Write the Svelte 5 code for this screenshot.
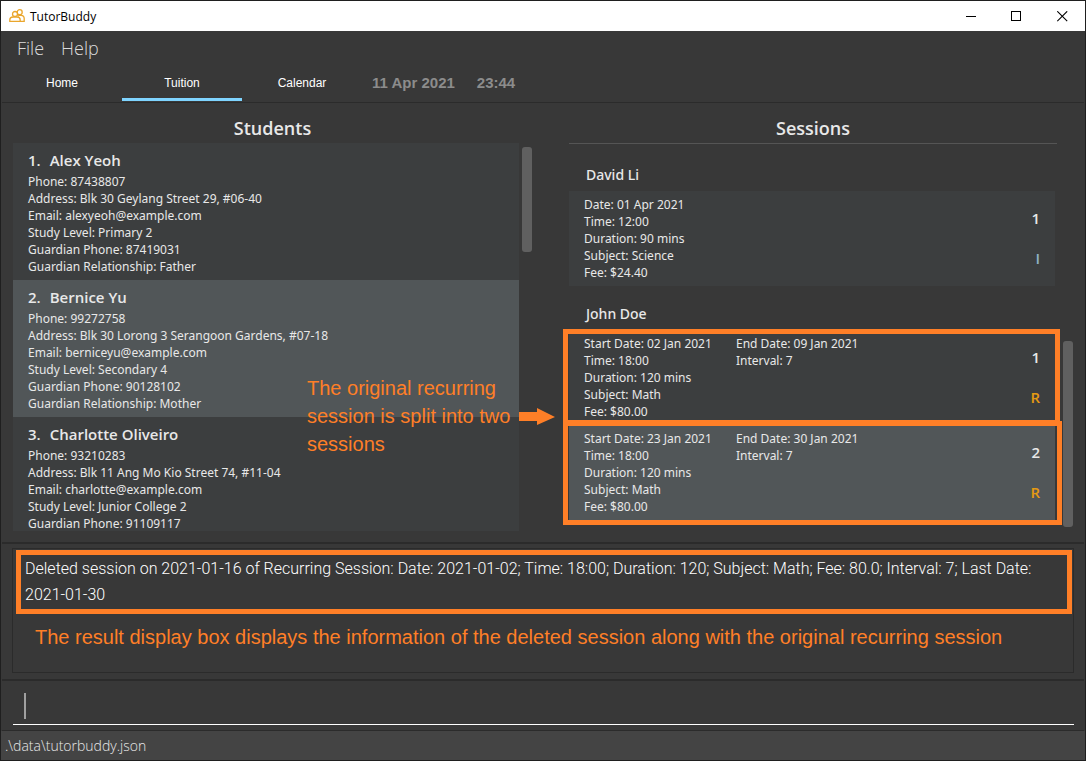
<script>
  const tabs = ['Home', 'Tuition', 'Calendar'];
  let active = $state('Tuition');

  const students = [
    {
      name: 'Alex Yeoh', phone: '87438807', address: 'Blk 30 Geylang Street 29, #06-40',
      email: 'alexyeoh@example.com', level: 'Primary 2', guardian: '87419031', relation: 'Father'
    },
    {
      name: 'Bernice Yu', phone: '99272758', address: 'Blk 30 Lorong 3 Serangoon Gardens, #07-18',
      email: 'berniceyu@example.com', level: 'Secondary 4', guardian: '90128102', relation: 'Mother'
    },
    {
      name: 'Charlotte Oliveiro', phone: '93210283', address: 'Blk 11 Ang Mo Kio Street 74, #11-04',
      email: 'charlotte@example.com', level: 'Junior College 2', guardian: '91109117'
    }
  ];

  const groups = [
    {
      name: 'David Li',
      sessions: [
        { left: ['Date: 01 Apr 2021', 'Time: 12:00', 'Duration: 90 mins', 'Subject: Science', 'Fee: $24.40'], right: [], kind: 'I' }
      ]
    },
    {
      name: 'John Doe',
      sessions: [
        { left: ['Start Date: 02 Jan 2021', 'Time: 18:00', 'Duration: 120 mins', 'Subject: Math', 'Fee: $80.00'], right: ['End Date: 09 Jan 2021', 'Interval: 7'], kind: 'R' },
        { left: ['Start Date: 23 Jan 2021', 'Time: 18:00', 'Duration: 120 mins', 'Subject: Math', 'Fee: $80.00'], right: ['End Date: 30 Jan 2021', 'Interval: 7'], kind: 'R' }
      ]
    }
  ];

  const result =
    'Deleted session on 2021-01-16 of Recurring Session: Date: 2021-01-02; Time: 18:00; Duration: 120; Subject: Math; Fee: 80.0; Interval: 7; Last Date: 2021-01-30';
</script>

<div class="window">
  <header class="titlebar">
    <svg class="logo" width="16" height="14" viewBox="0 0 16 14" fill="none" stroke="#eaa62c" stroke-width="1.3" aria-hidden="true">
      <circle cx="10.7" cy="3.2" r="2.5" />
      <path d="M9 7.2L10.2 6.4H12C13.9 6.4 15.2 7.8 15.2 9.6V12.3H11" />
      <circle cx="6" cy="5" r="2.5" fill="#fff" />
      <path fill="#fff" d="M.8 12.3V11C.8 9.2 2.2 8 4 8H8C9.8 8 11.2 9.2 11.2 11V12.3Z" />
    </svg>
    <h1>TutorBuddy</h1>
    <div class="controls">
      <button aria-label="Minimize"><svg width="11" height="11" viewBox="0 0 11 11" stroke="#000"><path d="M1 5.5H11" /></svg></button>
      <button aria-label="Maximize"><svg width="11" height="11" viewBox="0 0 11 11" stroke="#000" fill="none"><rect x=".5" y=".5" width="9" height="9" /></svg></button>
      <button aria-label="Close"><svg width="11" height="11" viewBox="0 0 11 11" stroke="#000" stroke-width="1.1"><path d="M.3 .3L10.2 10.2M10.2 .3L.3 10.2" /></svg></button>
    </div>
  </header>

  <nav class="menu">
    <button>File</button>
    <button>Help</button>
  </nav>

  <div class="tabbar">
    <div class="tabs" role="tablist">
      {#each tabs as tab}
        <button role="tab" aria-selected={active === tab} class:active={active === tab} onclick={() => (active = tab)}>{tab}</button>
      {/each}
    </div>
    <time class="clock"><span>11 Apr 2021</span><span>23:44</span></time>
  </div>

  <main class="split">
    <section class="pane students">
      <h2>Students</h2>
      <div class="scroller">
        <ol class="list">
          {#each students as s, i}
            <li class="student" class:alt={i % 2 === 1}>
              <h3><span>{i + 1}.</span>{s.name}</h3>
              <p>Phone: {s.phone}</p>
              <p>Address: {s.address}</p>
              <p>Email: {s.email}</p>
              <p>Study Level: {s.level}</p>
              <p>Guardian Phone: {s.guardian}</p>
              {#if s.relation}<p>Guardian Relationship: {s.relation}</p>{/if}
            </li>
          {/each}
        </ol>
        <div class="track"><div class="thumb"></div></div>
      </div>
      <div class="callout">
        <p>The original recurring session is split into two sessions</p>
        <svg width="36" height="18" viewBox="0 0 36 18" fill="#ff7f27" aria-hidden="true"><path d="M0 5H18V1L36 10L18 18V14H0Z" /></svg>
      </div>
    </section>

    <section class="pane sessions">
      <h2>Sessions</h2>
      <div class="scroller">
        <div class="list">
          {#each groups as g}
            <div class="group">
              <h3>{g.name}</h3>
              <ul>
                {#each g.sessions as s, i}
                  <li class="session" class:alt={i % 2 === 1} class:marked={s.kind === 'R'}>
                    <div>{#each s.left as line}<p>{line}</p>{/each}</div>
                    <div>{#each s.right as line}<p>{line}</p>{/each}</div>
                    <div class="side"><b>{i + 1}</b><b class={s.kind === 'R' ? 'recurring' : 'individual'}>{s.kind}</b></div>
                  </li>
                {/each}
              </ul>
            </div>
          {/each}
        </div>
        <div class="track"><div class="thumb"></div></div>
      </div>
    </section>
  </main>

  <section class="result">
    <textarea readonly aria-label="Result" value={result}></textarea>
    <div class="result-mark"></div>
    <p class="note">The result display box displays the information of the deleted session along with the original recurring session</p>
  </section>

  <section class="command">
    <input type="text" aria-label="Command" />
    <span class="caret"></span>
  </section>

  <footer>.\data\tutorbuddy.json</footer>
</div>

<style>
  :global(body) { margin: 0; background: #1f1f1f; }
  .window {
    box-sizing: border-box;
    height: 100vh;
    min-height: 640px;
    border: 1px solid #1f1f1f;
    display: flex;
    flex-direction: column;
    background: #383838;
    color: #e8e8e8;
    font-family: "Noto Sans", "Open Sans", sans-serif;
  }
  h1, h2, h3, p, ol, ul { margin: 0; padding: 0; list-style: none; font-weight: 400; }
  button { border: 0; padding: 0; background: none; color: inherit; font: inherit; }

  .titlebar { flex: none; height: 30px; display: flex; align-items: center; background: #fff; color: #000; padding-left: 8px; }
  .logo { margin-right: 5px; }
  h1 { font: 12px "Open Sans", sans-serif; flex: 1; }
  .controls { display: flex; height: 100%; }
  .controls button { width: 46px; display: grid; place-items: center; }

  .menu { flex: none; height: 34px; display: flex; gap: 17px; padding-left: 16px; font-family: "Open Sans", sans-serif; font-size: 18px; font-weight: 300; color: #dcdcdc; }

  .tabbar { flex: none; height: 36px; display: flex; padding: 0 1px; margin-bottom: 1px; font-family: "Liberation Sans", Arial, sans-serif; }
  .tabs { display: flex; }
  .tabs button { box-sizing: border-box; width: 120px; padding-top: 3px; border-bottom: 3px solid transparent; font-size: 12px; color: #fff; }
  .tabs .active { border-color: #7fd4ff; }
  .clock { display: flex; align-items: center; gap: 22px; margin-left: 10px; padding-bottom: 2px; font-size: 15px; font-weight: 700; color: #8c8c8c; }

  .split { flex: 1; min-height: 0; display: grid; grid-template-columns: 1fr 1fr; grid-template-rows: minmax(0, 1fr); margin: 0 1px; border: 1px solid #2b2b2b; border-width: 1px 0 2px; }
  .pane { position: relative; min-width: 0; display: flex; flex-direction: column; padding: 10px 11px 11px; }
  h2 { flex: none; height: 30px; line-height: 30px; text-align: center; font-family: "Open Sans", sans-serif; font-size: 18px; font-weight: 600; }
  .scroller { flex: 1; min-height: 0; display: flex; }
  .list { flex: 1; overflow: hidden; }
  .track { width: 10px; display: flex; flex-direction: column; }
  .thumb { border-radius: 3px; background: #606060; }

  .students .scroller { gap: 3px; }
  .students .thumb { margin-top: 4px; height: 27%; }
  .student { padding: 7px 15px 5px; background: #3c3e3f; }
  .alt { background: #515658; }
  .student h3 { line-height: 20px; margin-bottom: 3px; font-family: "Open Sans", sans-serif; font-size: 15px; font-weight: 600; }
  .student h3 span { margin-right: 9px; }
  .student p, .session p { font-size: 12px; line-height: 17px; }

  .sessions { padding-left: 26px; }
  .sessions h2 { margin-right: 16px; border-bottom: 1px solid #555; }
  .sessions .scroller { gap: 8px; }
  .sessions .track { justify-content: flex-end; }
  .sessions .thumb { height: 48%; margin-bottom: 4px; }
  .sessions .list { padding-top: 3px; overflow: visible; }
  .group { padding-top: 18px; }
  .group h3 { padding: 0 17px 6px; font-size: 14px; line-height: 20px; font-weight: 500; }
  .session { position: relative; display: grid; grid-template-columns: 152px 1fr auto; padding: 5px 15px; background: #3c3e3f; }
  .session.alt { background: #515658; }
  .side { display: flex; flex-direction: column; align-items: flex-end; padding-top: 2px; }
  .side b { font-family: "Open Sans", sans-serif; font-size: 15px; line-height: 40px; font-weight: 600; }
  .side .recurring { color: #e59a12; }
  .side .individual { color: #8fb3c4; }
  .marked::after { content: ""; position: absolute; inset: -1px -5px 0 -6px; border: 5px solid #ff7f27; }
  .marked.alt::after { inset: -4px -7px -5px -6px; }

  .callout { position: absolute; left: 305px; right: -12px; top: 271px; z-index: 1; display: flex; align-items: center; color: #ff7f27; }
  .callout p { flex: 1; font: 20px/28px "Liberation Sans", Arial, sans-serif; }

  .result { position: relative; flex: none; height: 137px; box-sizing: border-box; padding: 4px 10px 6px; margin: 0 1px; border-bottom: 2px solid #2b2b2b; }
  textarea { box-sizing: border-box; width: 100%; height: 100%; display: block; resize: none; border: 1px solid #2b2b2b; outline: 0; padding: 7px 7px 6px 12px; background: none; color: #fff; font: 300 16px/26px Roboto, "Open Sans", sans-serif; overflow: hidden; }
  .result-mark { position: absolute; left: 14px; right: 12px; top: 6px; height: 54px; border: 5px solid #ff7f27; }
  .note { position: absolute; left: 33px; top: 80px; white-space: nowrap; color: #ff7f27; font: 20px/26px "Liberation Sans", Arial, sans-serif; }

  .command { position: relative; flex: none; height: 50px; box-sizing: border-box; padding: 8px 10px 5px 11px; margin: 0 1px; border-bottom: 1px solid #2b2b2b; }
  input { box-sizing: border-box; width: 100%; height: 100%; border: 0; border-bottom: 1px solid #fff; outline: 0; padding: 0 11px; background: none; color: #fff; font: 300 16px/26px "Open Sans", sans-serif; }
  .caret { position: absolute; left: 22px; top: 12px; width: 2px; height: 26px; background: #a0a0a0; }
  footer { flex: none; height: 29px; line-height: 29px; padding-left: 4px; background: #444; font-family: "Open Sans", sans-serif; font-size: 14px; font-weight: 300; }
</style>
